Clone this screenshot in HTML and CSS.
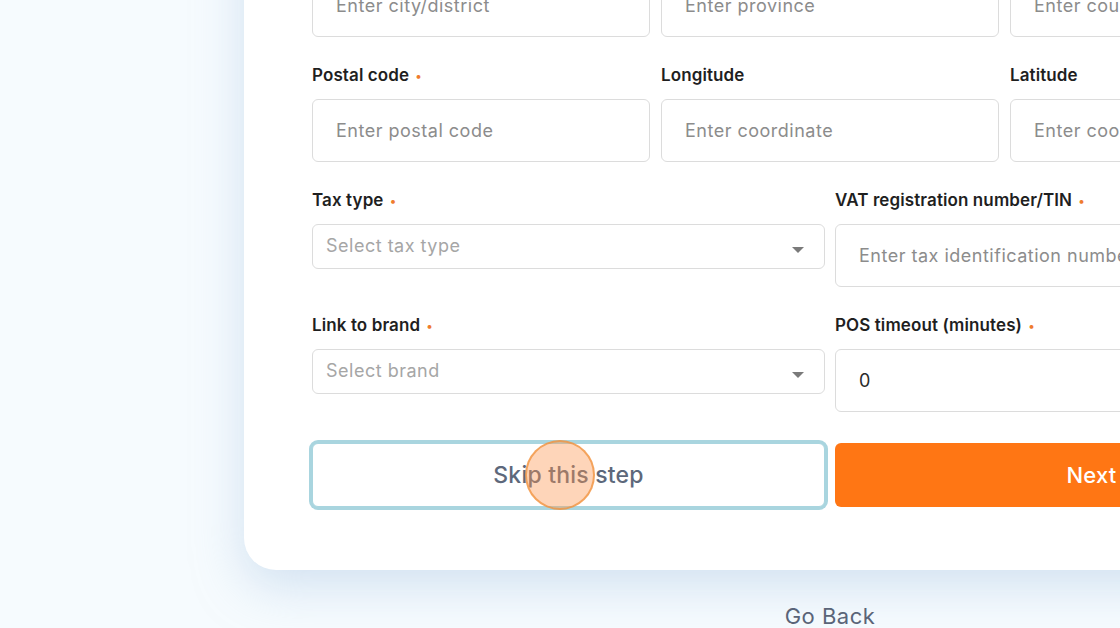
FILE: index.html
```html
<!DOCTYPE html>
<html lang="en">
<head>
<meta charset="utf-8">
<title>Store details</title>
<link rel="stylesheet" href="styles.css">
</head>
<body>
<div class="page">
  <div class="card">
    <div class="row three">
      <div class="field">
        <label class="label">City/district <span class="req">•</span></label>
        <div class="input"><span class="ph">Enter city/district</span></div>
      </div>
      <div class="field">
        <label class="label">Province <span class="req">•</span></label>
        <div class="input"><span class="ph">Enter province</span></div>
      </div>
      <div class="field">
        <label class="label">Country <span class="req">•</span></label>
        <div class="input"><span class="ph">Enter country</span></div>
      </div>
    </div>
    <div class="row three">
      <div class="field">
        <label class="label">Postal code <span class="req">•</span></label>
        <div class="input"><span class="ph">Enter postal code</span></div>
      </div>
      <div class="field">
        <label class="label">Longitude</label>
        <div class="input"><span class="ph">Enter coordinate</span></div>
      </div>
      <div class="field">
        <label class="label">Latitude</label>
        <div class="input"><span class="ph">Enter coordinate</span></div>
      </div>
    </div>
    <div class="row two">
      <div class="field">
        <label class="label">Tax type <span class="req">•</span></label>
        <div class="select"><span class="sph">Select tax type</span><span class="caret"></span></div>
      </div>
      <div class="field">
        <label class="label">VAT registration number/TIN <span class="req">•</span></label>
        <div class="input"><span class="ph">Enter tax identification number</span></div>
      </div>
    </div>
    <div class="row two">
      <div class="field">
        <label class="label">Link to brand <span class="req">•</span></label>
        <div class="select"><span class="sph">Select brand</span><span class="caret"></span></div>
      </div>
      <div class="field">
        <label class="label">POS timeout (minutes) <span class="req">•</span></label>
        <div class="input"><span class="val">0</span></div>
      </div>
    </div>
    <div class="actions">
      <div class="skip-wrap">
        <button class="btn skip">Skip this step</button>
        <span class="touch"></span>
      </div>
      <button class="btn next">Next</button>
    </div>
  </div>
  <div class="back">Go Back</div>
</div>
</body>
</html>
```
FILE: styles.css
```css
* { box-sizing: border-box; }
html, body { margin: 0; padding: 0; }
body {
  width: 1120px;
  height: 628px;
  overflow: hidden;
  background: #f6fbfe;
  font-family: Inter, "Open Sans", "Liberation Sans", sans-serif;
}
.page {
  padding-left: 244px;
  width: 1416px;
}
.card {
  width: 1172px;
  margin-top: -100px;
  padding: 38px 68px 63px;
  background: #fff;
  border-radius: 32px;
  box-shadow: 0 16px 48px rgba(175, 202, 230, 0.5);
  display: flex;
  flex-direction: column;
  gap: 26px;
}
.row { display: grid; gap: 11px; align-items: start; }
.three { grid-template-columns: repeat(3, 1fr); }
.two { grid-template-columns: repeat(2, 1fr); gap: 10px; }
.field { display: flex; flex-direction: column; gap: 12px; }
.label {
  height: 24px;
  line-height: 24px;
  font-size: 17px;
  font-weight: 600;
  color: #1f1f1f;
  letter-spacing: 0.1px;
}
.req {
  color: #ef7b2e;
  font-size: 12px;
  vertical-align: 1px;
  margin-left: 2px;
}
.input {
  height: 63px;
  border: 1px solid #dcdcdc;
  border-radius: 6px;
  padding: 0 23px;
  display: flex;
  align-items: center;
  font-size: 18px;
  letter-spacing: 0.5px;
  white-space: nowrap;
  overflow: hidden;
}
.ph { color: #8c8c8c; }
.val { color: #2a2a2a; }
.select {
  height: 45px;
  border: 1px solid #dcdcdc;
  border-radius: 6px;
  padding: 0 20px 0 13px;
  display: flex;
  align-items: center;
  justify-content: space-between;
  font-size: 18px;
  letter-spacing: 0.5px;
}
.sph { color: #a6a6a6; margin-top: -3px; }
.caret {
  width: 0; height: 0;
  border-left: 6px solid transparent;
  border-right: 6px solid transparent;
  border-top: 6px solid #7a7a7a;
  margin-top: 6px;
}
.actions {
  display: grid;
  grid-template-columns: repeat(2, 1fr);
  gap: 10px;
  margin-top: 5px;
}
.skip-wrap { position: relative; }
.btn {
  width: 100%;
  height: 64px;
  border-radius: 6px;
  font-family: inherit;
  font-size: 23px;
  font-weight: 500;
  letter-spacing: 0.2px;
  cursor: pointer;
}
.skip {
  background: #fff;
  border: 1px solid #a9d5df;
  box-shadow: 0 0 0 3px #a9d5df;
  color: #5d687b;
}
.next {
  background: #ff7614;
  border: none;
  color: #fff;
  font-size: 22px;
}
.touch {
  position: absolute;
  left: 213px;
  top: -3px;
  width: 70px;
  height: 70px;
  border-radius: 50%;
  background: rgba(252, 150, 80, 0.4);
  border: 2px solid rgba(240, 145, 60, 0.75);
  pointer-events: none;
}
.back {
  width: 1172px;
  text-align: center;
  margin-top: 31px;
  font-size: 22px;
  line-height: 30px;
  letter-spacing: 0.5px;
  color: #5a6478;
}
```
